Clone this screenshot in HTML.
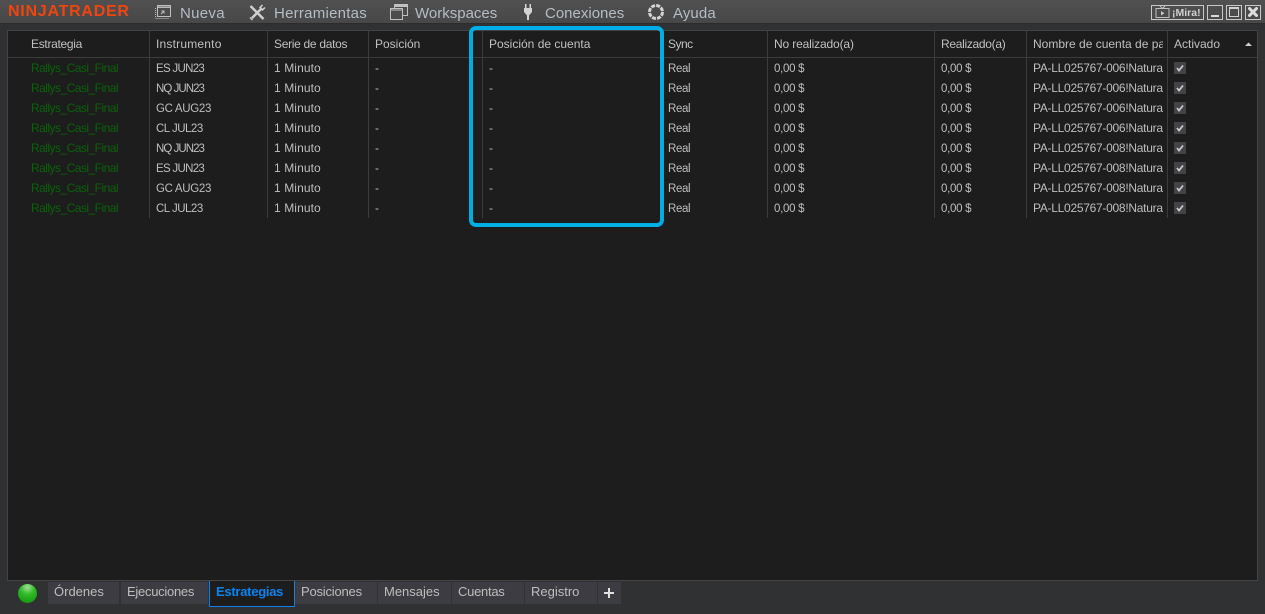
<!DOCTYPE html>
<html><head><meta charset="utf-8">
<style>
html,body{margin:0;padding:0;width:1265px;height:614px;overflow:hidden;background:#303132;font-family:"Liberation Sans",sans-serif}
div,span{position:absolute;white-space:nowrap}
.t{font-size:12px;line-height:20px;color:#bebebe}
.h{font-size:12px;line-height:20px;color:#c0c0c0;top:34px}
.g{color:#0a620a;letter-spacing:-.53px}
.m{font-size:15px;line-height:24px;color:#b4bcc4;top:2px}
.v{width:1px;background:#3c3c3c;top:31px;height:187px}
.tab{top:582px;height:22px;background:#3c3c42;font-size:13px;line-height:20px;color:#bebebe;box-sizing:border-box}
.wb{top:5px;height:13px;border:1px solid #c8c8c8;box-sizing:content-box}
.re{font-size:11.5px;letter-spacing:-.35px;margin-top:.5px}
.mo{letter-spacing:.1px}
.pa{letter-spacing:-.28px;width:130px;overflow:hidden}
.m0{font-size:11.5px;letter-spacing:-.3px;margin-top:.5px}
.i{font-size:11.5px;margin-top:.5px}
.es{letter-spacing:-.7px}
.nq{letter-spacing:-.95px}
.gc{letter-spacing:-.3px}
.cl{letter-spacing:-.5px}
</style></head><body>
<div style="left:0;top:0;width:1265px;height:23px;background:linear-gradient(#505050,#484848)"></div>
<div style="left:0;top:23px;width:1265px;height:1px;background:#2c2c2c"></div>
<div style="left:8px;top:0;font:bold 16px/24px 'Liberation Sans',sans-serif;letter-spacing:.75px;color:#f2440c">NINJATRADER</div>

<svg style="position:absolute;left:155px;top:4px" width="17" height="15" viewBox="0 0 17 15" fill="none" stroke="#c0c0c0"><path d="M2.500 1.500H15.500V12.500H2.500Z"/><path d="M3 3.200H15" stroke-width="1.500"/><path d="M.5 14.500H14M.5 4V14" stroke-dasharray="1 1"/><path d="M6 10L9 7M6.500 7H9V9.500"/></svg>
<div class="m" style="left:180px;letter-spacing:.3px">Nueva</div>
<svg style="position:absolute;left:249px;top:4px" width="17" height="17" viewBox="0 0 17 17" fill="none" stroke="#d0d0d0"><path d="M1.500 2L14.500 15" stroke-width="2.500"/><path d="M13 4L3 14" stroke-width="2.500"/><path d="M10.500 4L13.500 1M13 6.500L16 3.500" stroke-width="1.500"/><path d="M1 13.500L3.500 16" stroke-width="1.500"/></svg>
<div class="m" style="left:274px;letter-spacing:.25px">Herramientas</div>
<svg style="position:absolute;left:389px;top:4px" width="20" height="17" viewBox="0 0 20 17" fill="none" stroke="#c0c0c0"><path d="M5.500 .5H18.500V11.500H5.500Z"/><path d="M6 2H18" stroke-width="2"/><path d="M1.500 4.500H13.500V15.500H1.500Z" fill="#4c4c4c"/><path d="M2 6H13" stroke-width="1"/></svg>
<div class="m" style="left:415px">Workspaces</div>
<svg style="position:absolute;left:523px;top:3px" width="10" height="18" viewBox="0 0 10 18" fill="#d4d4d4"><path d="M2 1h1.500v4H2zM6.500 1H8v4H6.500zM1 5h8v4L6 12.500V17H4v-4.500L1 9z"/></svg>
<div class="m" style="left:545px">Conexiones</div>
<svg style="position:absolute;left:647px;top:3px" width="18" height="18" viewBox="0 0 18 18" fill="none" stroke="#d4d4d4"><circle cx="9" cy="9" r="6.500" stroke-width="3" stroke-dasharray="4 1.100"/></svg>
<div class="m" style="left:673px;letter-spacing:.1px">Ayuda</div>

<div class="wb" style="left:1151px;width:51px"></div>
<svg style="position:absolute;left:1155px;top:5px" width="16" height="14" viewBox="0 0 16 14" fill="none" stroke="#c0c0c0"><path d="M1 3.500H14V12.500H1ZM4.500 .5L7.500 3.500L10.500 .5"/><path d="M6 6V10.500L9.500 8.200Z" fill="#c8c8c8" stroke="none"/></svg>
<div style="left:1172px;top:5px;font:bold 10.5px/16px 'Liberation Sans',sans-serif;color:#d0d0d0">¡Mira!</div>
<div class="wb" style="left:1207px;width:14px"></div>
<div style="left:1211px;top:15px;width:8px;height:2px;background:#d8d8d8"></div>
<div class="wb" style="left:1226px;width:14px"></div>
<div style="left:1229px;top:7px;width:8px;height:7px;border:1px solid #d0d0d0;border-top:2px solid #d0d0d0"></div>
<div class="wb" style="left:1245px;width:14px"></div>
<svg style="position:absolute;left:1248px;top:7px" width="10" height="10" viewBox="0 0 10 10" stroke="#dcdcdc" stroke-width="3"><path d="M.5 .5L9.500 9.500M9.500 .5L.5 9.500"/></svg>

<div style="left:7px;top:30px;width:1249px;height:549px;background:#1d1d1d;border:1px solid #444"></div>
<div style="left:8px;top:57px;width:1249px;height:1px;background:#3c3c3c"></div>

<div class="v" style="left:149px"></div><div class="v" style="left:267px"></div><div class="v" style="left:368px"></div><div class="v" style="left:482px"></div><div class="v" style="left:661px"></div><div class="v" style="left:767px"></div><div class="v" style="left:934px"></div><div class="v" style="left:1026px"></div><div class="v" style="left:1167px"></div>

<div class="h" style="left:31px;letter-spacing:-.3px">Estrategia</div><div class="h" style="left:156px;letter-spacing:.2px">Instrumento</div><div class="h" style="left:274px;letter-spacing:-.3px">Serie de datos</div><div class="h" style="left:375px">Posición</div><div class="h" style="left:489px">Posición de cuenta</div><div class="h" style="left:668px;letter-spacing:-.5px">Sync</div><div class="h" style="left:774px;letter-spacing:-.15px">No realizado(a)</div><div class="h" style="left:941px;letter-spacing:-.3px">Realizado(a)</div><div class="h" style="left:1033px;width:130px;overflow:hidden">Nombre de cuenta de pa</div><div class="h" style="left:1174px">Activado</div>
<svg style="position:absolute;left:1244px;top:41px" width="9" height="6"><path d="M1 5L4.500 1.500L8 5Z" fill="#d0d0d0"/></svg>

<!-- rows -->
<div class="t g" style="left:31px;top:58px">Rallys_Casi_Final</div><div class="t i es" style="left:156px;top:58px">ES JUN23</div><div class="t mo" style="left:274px;top:58px">1 Minuto</div><div class="t" style="left:375px;top:58px">-</div><div class="t" style="left:489px;top:58px">-</div><div class="t re" style="left:668px;top:58px">Real</div><div class="t m0" style="left:774px;top:58px">0,00 $</div><div class="t m0" style="left:941px;top:58px">0,00 $</div><div class="t pa" style="left:1033px;top:58px">PA-LL025767-006!Natura</div>
<div class="t g" style="left:31px;top:78px">Rallys_Casi_Final</div><div class="t i nq" style="left:156px;top:78px">NQ JUN23</div><div class="t mo" style="left:274px;top:78px">1 Minuto</div><div class="t" style="left:375px;top:78px">-</div><div class="t" style="left:489px;top:78px">-</div><div class="t re" style="left:668px;top:78px">Real</div><div class="t m0" style="left:774px;top:78px">0,00 $</div><div class="t m0" style="left:941px;top:78px">0,00 $</div><div class="t pa" style="left:1033px;top:78px">PA-LL025767-006!Natura</div>
<div class="t g" style="left:31px;top:98px">Rallys_Casi_Final</div><div class="t i gc" style="left:156px;top:98px">GC AUG23</div><div class="t mo" style="left:274px;top:98px">1 Minuto</div><div class="t" style="left:375px;top:98px">-</div><div class="t" style="left:489px;top:98px">-</div><div class="t re" style="left:668px;top:98px">Real</div><div class="t m0" style="left:774px;top:98px">0,00 $</div><div class="t m0" style="left:941px;top:98px">0,00 $</div><div class="t pa" style="left:1033px;top:98px">PA-LL025767-006!Natura</div>
<div class="t g" style="left:31px;top:118px">Rallys_Casi_Final</div><div class="t i cl" style="left:156px;top:118px">CL JUL23</div><div class="t mo" style="left:274px;top:118px">1 Minuto</div><div class="t" style="left:375px;top:118px">-</div><div class="t" style="left:489px;top:118px">-</div><div class="t re" style="left:668px;top:118px">Real</div><div class="t m0" style="left:774px;top:118px">0,00 $</div><div class="t m0" style="left:941px;top:118px">0,00 $</div><div class="t pa" style="left:1033px;top:118px">PA-LL025767-006!Natura</div>
<div class="t g" style="left:31px;top:138px">Rallys_Casi_Final</div><div class="t i nq" style="left:156px;top:138px">NQ JUN23</div><div class="t mo" style="left:274px;top:138px">1 Minuto</div><div class="t" style="left:375px;top:138px">-</div><div class="t" style="left:489px;top:138px">-</div><div class="t re" style="left:668px;top:138px">Real</div><div class="t m0" style="left:774px;top:138px">0,00 $</div><div class="t m0" style="left:941px;top:138px">0,00 $</div><div class="t pa" style="left:1033px;top:138px">PA-LL025767-008!Natura</div>
<div class="t g" style="left:31px;top:158px">Rallys_Casi_Final</div><div class="t i es" style="left:156px;top:158px">ES JUN23</div><div class="t mo" style="left:274px;top:158px">1 Minuto</div><div class="t" style="left:375px;top:158px">-</div><div class="t" style="left:489px;top:158px">-</div><div class="t re" style="left:668px;top:158px">Real</div><div class="t m0" style="left:774px;top:158px">0,00 $</div><div class="t m0" style="left:941px;top:158px">0,00 $</div><div class="t pa" style="left:1033px;top:158px">PA-LL025767-008!Natura</div>
<div class="t g" style="left:31px;top:178px">Rallys_Casi_Final</div><div class="t i gc" style="left:156px;top:178px">GC AUG23</div><div class="t mo" style="left:274px;top:178px">1 Minuto</div><div class="t" style="left:375px;top:178px">-</div><div class="t" style="left:489px;top:178px">-</div><div class="t re" style="left:668px;top:178px">Real</div><div class="t m0" style="left:774px;top:178px">0,00 $</div><div class="t m0" style="left:941px;top:178px">0,00 $</div><div class="t pa" style="left:1033px;top:178px">PA-LL025767-008!Natura</div>
<div class="t g" style="left:31px;top:198px">Rallys_Casi_Final</div><div class="t i cl" style="left:156px;top:198px">CL JUL23</div><div class="t mo" style="left:274px;top:198px">1 Minuto</div><div class="t" style="left:375px;top:198px">-</div><div class="t" style="left:489px;top:198px">-</div><div class="t re" style="left:668px;top:198px">Real</div><div class="t m0" style="left:774px;top:198px">0,00 $</div><div class="t m0" style="left:941px;top:198px">0,00 $</div><div class="t pa" style="left:1033px;top:198px">PA-LL025767-008!Natura</div>

<svg style="position:absolute;left:1174px;top:62px" width="12" height="152" viewBox="0 0 12 152">
<g fill="#434347"><rect y="0" width="12" height="12"/><rect y="20" width="12" height="12"/><rect y="40" width="12" height="12"/><rect y="60" width="12" height="12"/><rect y="80" width="12" height="12"/><rect y="100" width="12" height="12"/><rect y="120" width="12" height="12"/><rect y="140" width="12" height="12"/></g>
<g fill="none" stroke="#c8c8c8" stroke-width="1.800"><path d="M3 6L5 8.500L9 3.500"/><path d="M3 26L5 28.500L9 23.500"/><path d="M3 46L5 48.500L9 43.500"/><path d="M3 66L5 68.500L9 63.500"/><path d="M3 86L5 88.500L9 83.500"/><path d="M3 106L5 108.500L9 103.500"/><path d="M3 126L5 128.500L9 123.500"/><path d="M3 146L5 148.500L9 143.500"/></g>
</svg>

<!-- highlight -->
<div style="left:469px;top:26px;width:195px;height:201px;border:4px solid #00aee6;border-radius:7px;box-sizing:border-box"></div>

<!-- tabs -->
<div style="left:18px;top:584px;width:19px;height:19px;border-radius:50%;background:radial-gradient(circle at 50% 18%,#9fe096 0,#34bc2a 38%,#169a12 85%)"></div>
<div class="tab" style="left:48px;width:71px;padding-left:6px">Órdenes</div>
<div class="tab" style="left:121px;width:87px;padding-left:6px;letter-spacing:-.27px">Ejecuciones</div>
<div class="tab" style="left:209px;top:581px;width:86px;height:26px;background:#1d1d1d;border:1px solid #1080e8;border-top:0;padding:1px 0 0 6px;font-weight:bold;color:#0a84f0;letter-spacing:-.27px">Estrategias</div>
<div class="tab" style="left:295px;width:82px;padding-left:6px;letter-spacing:-.2px">Posiciones</div>
<div class="tab" style="left:378px;width:73px;padding-left:6px">Mensajes</div>
<div class="tab" style="left:452px;width:72px;padding-left:6px;letter-spacing:-.27px">Cuentas</div>
<div class="tab" style="left:525px;width:72px;padding-left:6px">Registro</div>
<div class="tab" style="left:598px;width:23px"></div>
<div style="left:604px;top:592px;width:10px;height:2px;background:#e0e0e0"></div>
<div style="left:608px;top:588px;width:2px;height:10px;background:#e0e0e0"></div>
</body></html>
